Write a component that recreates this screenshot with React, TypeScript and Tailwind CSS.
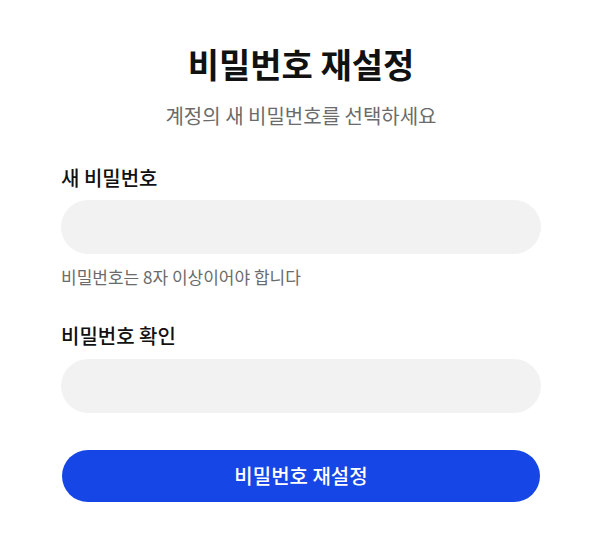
import React from "react";

export default function App() {
  return (
    <div
      className="min-h-screen bg-white"
      style={{ fontFamily: '"Noto Sans CJK KR", "Noto Sans", sans-serif' }}
    >
      <div className="ml-[61px] flex w-[480px] flex-col pt-[46px]">
        <h1 className="text-center text-[34px] font-bold leading-[36px] text-[#111111]">
          비밀번호 재설정
        </h1>
        <p className="mt-5 text-center text-[20px] leading-7 text-[#6b6b6b]">
          계정의 새 비밀번호를 선택하세요
        </p>

        <form className="mt-[34px] flex flex-col" onSubmit={(e) => e.preventDefault()}>
          <label className="text-[20px] font-medium leading-7 text-[#111111]">새 비밀번호</label>
          <input
            type="password"
            className="mt-2 h-[54px] w-full rounded-full bg-[#f2f2f2] px-6 outline-none"
          />
          <p className="mt-[11px] text-[17px] leading-6 text-[#6b6b6b]">
            비밀번호는 8자 이상이어야 합니다
          </p>

          <label className="mt-[33px] text-[20px] font-medium leading-7 text-[#111111]">
            비밀번호 확인
          </label>
          <input
            type="password"
            className="mt-[9px] h-[54px] w-full rounded-full bg-[#f2f2f2] px-6 outline-none"
          />

          <button
            type="submit"
            className="mx-px mt-[37px] h-[52px] rounded-full bg-[#1746e6] text-[20px] font-medium text-white"
          >
            비밀번호 재설정
          </button>
        </form>
      </div>
    </div>
  );
}
